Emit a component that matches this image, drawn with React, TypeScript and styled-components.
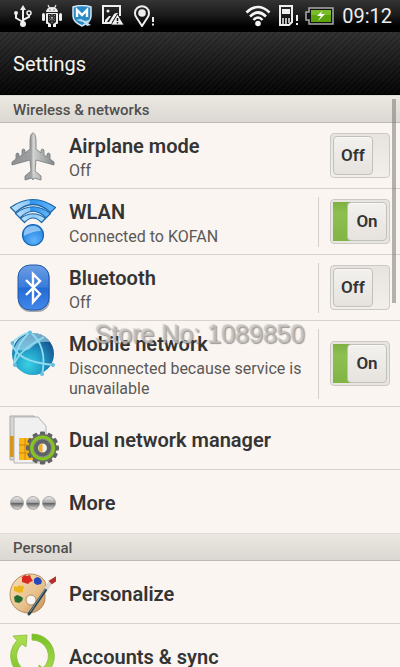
import React, { useState } from "react";
import styled, { createGlobalStyle } from "styled-components";

const GlobalStyle = createGlobalStyle`
  * { box-sizing: border-box; }
  body { margin: 0; background: #faf5f1; font-family: Roboto, "Noto Sans", sans-serif; color: #333; }
`;

const Screen = styled.div`
  position: relative;
  display: flex;
  flex-direction: column;
  height: 100vh;
  overflow: hidden;
  background: #faf5f1;
`;

const StatusBar = styled.div`
  flex: none;
  display: flex;
  align-items: center;
  justify-content: space-between;
  height: 31px;
  padding: 0 8px 0 13px;
  background: linear-gradient(#343434, #1a1a1a 50%, #000 85%);
  color: #eee;
`;

const IconGroup = styled.div<{ $gap: number }>`
  display: flex;
  align-items: center;
  gap: ${(p) => p.$gap}px;
  svg { display: block; }
`;

const Clock = styled.time`
  margin-left: 1px;
  font-size: 20px;
  line-height: 24px;
`;

const Header = styled.header`
  flex: none;
  display: flex;
  align-items: center;
  height: 64px;
  padding: 2px 13px 0;
  border-top: 1px solid #000;
  border-bottom: 1px solid #000;
  background:
    linear-gradient(rgba(52, 52, 52, 0.75), rgba(0, 0, 0, 0.85)),
    repeating-linear-gradient(135deg, #343434 0 2px, #121212 2px 4px);
`;

const Heading = styled.h1`
  margin: 0;
  font-size: 20px;
  line-height: 24px;
  font-weight: 400;
  color: #f6f4ec;
`;

const Content = styled.main`
  position: relative;
  flex: 1;
  min-height: 0;
  overflow: hidden;
`;

const SectionTitle = styled.h2`
  display: flex;
  align-items: center;
  height: 28px;
  margin: 0;
  padding: 2px 13px 0;
  border-top: 1px solid #dedbd5;
  border-bottom: 1px solid #bdbbb8;
  background: linear-gradient(#ebe8e1, #dbd8d3);
  font-size: 15px;
  font-weight: 500;
  color: #504f4d;
`;

const List = styled.ul`
  margin: 0;
  padding: 0;
  list-style: none;
`;

const Row = styled.li<{ $single?: boolean }>`
  display: flex;
  align-items: ${(p) => (p.$single ? "center" : "stretch")};
  gap: 12px;
  min-height: ${(p) => (p.$single ? 63 : 66)}px;
  padding: ${(p) => (p.$single ? "3px 10px 0 9px" : "8px 10px 7px 9px")};
  border-bottom: 1px solid #d5d2cf;
  &:last-child { border-bottom-color: #faf5f1; }
`;

const IconBox = styled.div`
  flex: none;
  width: 48px;
  height: 50px;
  svg { display: block; }
`;

const TextBlock = styled.div<{ $single?: boolean }>`
  flex: 1;
  min-width: 0;
  padding-top: ${(p) => (p.$single ? 0 : 3)}px;
`;

const Title = styled.div`
  font-size: 20px;
  line-height: 24px;
  font-weight: 600;
  color: #343434;
`;

const Detail = styled.div`
  margin-top: 3px;
  font-size: 16px;
  line-height: 20px;
  color: #5b5957;
`;

const Control = styled.div<{ $divided: boolean }>`
  flex: none;
  display: flex;
  align-items: center;
  padding: 0 0 2px 11px;
  border-left: 1px solid ${(p) => (p.$divided ? "#d3d0cd" : "transparent")};
`;

const Track = styled.button<{ $on: boolean }>`
  display: flex;
  justify-content: ${(p) => (p.$on ? "flex-end" : "flex-start")};
  width: 60px;
  height: 45px;
  padding: 2px;
  border: 1px solid #cbc9c5;
  border-radius: 4px;
  background: ${(p) =>
    p.$on
      ? "linear-gradient(#7fb043, #8cc152 30%, #80b445) 2px 2px / 22px 39px no-repeat, #e9e6e2"
      : "linear-gradient(#e7e4df, #f2eeea)"};
  font: inherit;
  cursor: pointer;
`;

const Knob = styled.span`
  display: flex;
  align-items: center;
  justify-content: center;
  width: 40px;
  height: 39px;
  border: 1px solid #c2c0bc;
  border-radius: 4px;
  background: linear-gradient(#f3f1ed, #e6e3df);
  box-shadow: inset 0 1px 0 #faf9f7;
  font-size: 17px;
  font-weight: 600;
  color: #333;
`;

const ScrollThumb = styled.div`
  position: absolute;
  top: 4px;
  right: 4px;
  width: 4px;
  height: 204px;
  background: rgba(120, 118, 116, 0.55);
`;

const Watermark = styled.div`
  position: absolute;
  top: 320px;
  left: 95px;
  font-family: "Liberation Sans", Arial, sans-serif;
  font-size: 25px;
  line-height: 28px;
  white-space: nowrap;
  color: rgba(196, 193, 190, 0.8);
  text-shadow: 1px 1px 1px rgba(90, 90, 90, 0.6), -1px -1px 1px rgba(150, 150, 150, 0.35);
  pointer-events: none;
`;

const UsbIcon = () => (
  <svg width="19" height="24" viewBox="0 0 19 24" fill="none" stroke="#eee" strokeWidth="2">
    <path d="M10 4v16M10 18L3 14V9M10 16l6-3v-2" />
    <path d="M10 1l3 5H7z" fill="#eee" stroke="none" />
    <circle cx="10" cy="20" r="3" fill="#eee" stroke="none" />
    <circle cx="3" cy="9" r="2" fill="#eee" stroke="none" />
    <circle cx="16" cy="9" r="2" strokeWidth="1.5" />
  </svg>
);

const RobotIcon = () => (
  <svg width="20" height="24" viewBox="0 0 20 24" fill="#eee">
    <path d="M4 8a6 5 0 0 1 12 0z" />
    <path d="M6 1l2 4M14 1l-2 4" stroke="#eee" strokeWidth="1.2" />
    <rect x="4" y="9" width="12" height="11" rx="1" />
    <rect x="0" y="9" width="3" height="8" rx="1.5" />
    <rect x="17" y="9" width="3" height="8" rx="1.5" />
    <path d="M6 19h3v4H6zM11 19h3v4h-3z" />
    <path d="M6 10h8v8l-4 3-4-3z" fill="#222" />
    <path d="M7 11l6 6M13 11l-6 6M10 10v10M7 14h6" stroke="#bbb" strokeWidth=".8" strokeDasharray="1.5 1" />
    <path d="M7.500 6h1M11.500 6h1" stroke="#222" />
  </svg>
);

const ShieldIcon = () => (
  <svg width="20" height="22" viewBox="0 0 20 22">
    <path d="M1 2q9-3 18 0v9q0 6-9 10Q1 17 1 11z" fill="#2889c7" stroke="#d4e6f2" strokeWidth="1.5" />
    <path d="M5 12V5l5 5 5-5v7" fill="none" stroke="#fff" strokeWidth="2.4" />
    <path d="M4 15l5-1 4 2 5-1-2 3 3 2-4 1-4-4z" fill="#b9dcf0" />
  </svg>
);

const PictureIcon = () => (
  <svg width="22" height="21" viewBox="0 0 22 21">
    <path d="M11 18H1V1h17v10" fill="none" stroke="#eee" strokeWidth="2" />
    <circle cx="6" cy="6" r="1.500" fill="#eee" />
    <path d="M3 17v-2l4-4h2l-4 6zM7 17l5-8 2-1h2l-6 9z" fill="#eee" />
    <path d="M15.500 9L22 20H9z" fill="#eee" stroke="#111" strokeWidth=".8" />
    <path d="M15.500 13v3M15.500 17v1.500" stroke="#111" strokeWidth="1.500" />
  </svg>
);

const PinIcon = () => (
  <svg width="21" height="22" viewBox="0 0 21 22">
    <path d="M8 21L2.500 12.500a7 7 0 1 1 11 0z" fill="none" stroke="#eee" strokeWidth="2" />
    <circle cx="8" cy="8" r="3.800" fill="#eee" />
    <path d="M19 12v5M19 18.500v2" stroke="#eee" strokeWidth="2" />
  </svg>
);

const SignalIcon = () => (
  <svg width="26" height="22" viewBox="0 0 26 22" fill="none" stroke="#f4f4f4" strokeWidth="2.600">
    <path d="M1.500 7.500q11.500-11 23 0M5 11.500q8-8 16 0M8.500 15q4.500-5 9 0" />
    <circle cx="13" cy="18.500" r="2.800" fill="#f4f4f4" stroke="none" />
  </svg>
);

const CardIcon = () => (
  <svg width="20" height="22" viewBox="0 0 20 22">
    <path d="M2 1h12v16l-3 3H2z" fill="none" stroke="#eee" strokeWidth="2" />
    <path d="M4 4h8v5H4z" fill="#eee" />
    <path d="M5 13v6M8 13v6M11 13v5" stroke="#eee" strokeWidth="1.500" />
    <path d="M19 10v6M19 18v2" stroke="#eee" strokeWidth="2" />
  </svg>
);

const BatteryIcon = () => (
  <svg width="29" height="18" viewBox="0 0 29 18">
    <path d="M4 1h24v16H4v-4H1V5h3z" fill="#111" stroke="#aaa" strokeWidth="1.500" />
    <path d="M6 3h20v12H6z" fill="#5da40b" />
    <path d="M6 3h20v5H6z" fill="#78bd28" />
    <path d="M17 4l-5 5h4l-3 5 7-7h-4z" fill="#fff" />
  </svg>
);

const PlaneIcon = () => (
  <svg width="48" height="50" viewBox="0 0 48 50">
    <defs>
      <linearGradient id="plane" x1="0" x2="1">
        <stop offset="0" stopColor="#8d8f90" />
        <stop offset=".46" stopColor="#9fa1a2" />
        <stop offset=".51" stopColor="#cfd0d0" />
        <stop offset="1" stopColor="#858788" />
      </linearGradient>
    </defs>
    <path
      d="M24 2c2 0 3 4 3 8v8l5 4v-3q1.500-2 3 0v5l3 2v-3q1.500-2 3 0v5l4 3v3l-18-5-1 11 6 5v4l-7-2-1 2-1-2-7 2v-4l6-5-1-11-18 5v-3l4-3v-5q1.500-2 3 0v3l3-2v-5q1.500-2 3 0v3l5-4v-8c0-4 1-8 3-8z"
      fill="url(#plane)"
      stroke="#77797a"
      strokeWidth=".8"
    />
    <path d="M24.500 6v37" stroke="#d4d5d5" strokeWidth="1.500" />
  </svg>
);

const WlanIcon = () => (
  <svg width="48" height="50" viewBox="0 0 48 50">
    <defs>
      <linearGradient id="arc" x1="0" x2="1">
        <stop offset="0" stopColor="#bfe1fa" />
        <stop offset=".42" stopColor="#8cc8f8" />
        <stop offset=".43" stopColor="#2b93ee" />
        <stop offset="1" stopColor="#68b8fb" />
      </linearGradient>
      <linearGradient id="arcLight" x1="0" x2="1">
        <stop offset="0" stopColor="#c9e6fb" />
        <stop offset=".5" stopColor="#8ccaf9" />
        <stop offset="1" stopColor="#b9dffb" />
      </linearGradient>
      <radialGradient id="ball" cx=".55" cy=".75">
        <stop offset="0" stopColor="#62b4fb" />
        <stop offset="1" stopColor="#2f8ce6" />
      </radialGradient>
    </defs>
    <g stroke="#1d68a8" strokeWidth="1.200" strokeLinejoin="round">
      <path d="M1.500 10.500Q24-5.500 46.500 10.500L41.500 15.500Q24-.5 6.500 15.500z" fill="url(#arc)" />
      <path d="M6.500 16.500Q24 3 41.500 16.500L37 21Q24 7.500 11 21z" fill="url(#arc)" />
      <path d="M11.500 21.500Q24 12 36.500 21.500L32.500 25.500Q24 16.500 15.500 25.500z" fill="url(#arcLight)" />
    </g>
    <circle cx="24" cy="38" r="10.500" fill="url(#ball)" stroke="#1765b5" strokeWidth="1.200" />
    <path d="M15 39q-1-10 9-10 6 0 8 5-8 0-17 5z" fill="#cbe6fb" opacity=".6" />
  </svg>
);

const BluetoothIcon = () => (
  <svg width="48" height="50" viewBox="0 0 48 50">
    <defs>
      <linearGradient id="blue" x2="0" y2="1">
        <stop offset="0" stopColor="#6c9ee4" />
        <stop offset=".48" stopColor="#397cda" />
        <stop offset=".52" stopColor="#236bd5" />
        <stop offset="1" stopColor="#4388eb" />
      </linearGradient>
    </defs>
    <rect x="9" y="3" width="32" height="46" rx="12" fill="#6b7787" opacity=".6" />
    <rect x="9" y="2" width="31" height="45" rx="12" fill="url(#blue)" stroke="#2259a9" />
    <path d="M17 17l14 14-7 8V11l7 7-14 14" fill="none" stroke="#fff" strokeWidth="2.400" />
  </svg>
);

const GlobeIcon = () => (
  <svg width="48" height="50" viewBox="0 0 48 50">
    <defs>
      <radialGradient id="globe" cx=".38" cy=".75" r=".75">
        <stop offset="0" stopColor="#38d2e3" />
        <stop offset=".5" stopColor="#2197c5" />
        <stop offset="1" stopColor="#14508b" />
      </radialGradient>
    </defs>
    <circle cx="24" cy="25" r="21" fill="url(#globe)" />
    <path d="M5 20Q10 5 26 4q10 1 15 9-13-1-18 5t-18 2z" fill="#b4e2f2" opacity=".6" />
    <g fill="none" stroke="#8edcf0" strokeWidth="1.800">
      <path d="M3 14q4 19 42 22" />
      <path d="M21 3q18 14 12 43" />
      <path d="M21 3Q6 17 5 36" />
      <path d="M5 36Q9 22 35 8" />
      <path d="M3 14Q11 6 21 3" />
    </g>
    <g fill="#64bedb">
      <circle cx="3.500" cy="14" r="2" />
      <circle cx="21" cy="3.500" r="2" />
      <circle cx="44" cy="36" r="2" />
      <circle cx="6" cy="36" r="2" />
      <circle cx="33" cy="45" r="2" />
    </g>
  </svg>
);

const teeth = Array.from({ length: 12 }, (_, i) => i * 30);

const SimGearIcon = () => (
  <svg width="50" height="50" viewBox="0 0 50 50">
    <path d="M1 1h24l7 7v37H1z" fill="#d5d5d5" stroke="#aaa" />
    <path d="M1 21h4v21H1z" fill="#d6961d" />
    <path d="M5 2h24l8 9v37H5z" fill="#f0f0f0" stroke="#b4b4b4" />
    <path d="M10 23h18v22H10z" fill="#fbb716" />
    <path d="M10 30h18M10 38h18M16 23v22" stroke="#c98710" />
    <g transform="translate(33.500 33)">
      <g fill="#5f6162">
        {teeth.map((angle) => (
          <rect key={angle} x="-2.500" y="-16.500" width="5" height="6" rx="1" transform={`rotate(${angle})`} />
        ))}
      </g>
      <circle r="14" fill="#696b6b" />
      <circle r="11" fill="#8a8c8c" stroke="#83c51c" strokeWidth="3" />
      <circle r="6.500" fill="#eee" stroke="#606365" strokeWidth="4" />
      <path d="M0-4a4 4 0 0 0 0 8z" fill="#f1ac22" />
    </g>
  </svg>
);

const MoreIcon = () => (
  <svg width="48" height="50" viewBox="0 0 48 50">
    <defs>
      <linearGradient id="bead" x2="0" y2="1">
        <stop offset="0" stopColor="#efefef" />
        <stop offset=".46" stopColor="#a5a5a5" />
        <stop offset=".5" stopColor="#5b5b5b" />
        <stop offset=".75" stopColor="#a0a0a0" />
        <stop offset="1" stopColor="#e6e6e6" />
      </linearGradient>
    </defs>
    <g fill="url(#bead)" stroke="#9a9a9a" strokeWidth=".8">
      <circle cx="8" cy="25" r="6.500" />
      <circle cx="24" cy="25" r="6.500" />
      <circle cx="40" cy="25" r="6.500" />
    </g>
  </svg>
);

const PaletteIcon = () => (
  <svg width="48" height="50" viewBox="0 0 48 50">
    <defs>
      <linearGradient id="wood" x2="1" y2="1">
        <stop offset="0" stopColor="#f6dfba" />
        <stop offset=".6" stopColor="#e8c18c" />
        <stop offset="1" stopColor="#c08a50" />
      </linearGradient>
    </defs>
    <path
      d="M1 26C1 14 10 5 21 5c9 0 16 5 16 12 0 5-2 6-1 10C37 37 29 44 20 44 9 44 1 36 1 26zm21 10a5 5 0 1 0 0-10 5 5 0 0 0 0 10z"
      fill="url(#wood)"
      fillRule="evenodd"
      stroke="#a57a4c"
      strokeWidth=".8"
    />
    <path d="M13 8l3-2 2 1 3-1 1 3 2 3-3 1-2 2-3-1-3-1z" fill="#d92a22" />
    <path d="M25 10l3-2 3 1 2 3-1 3-4 1-3-2z" fill="#2548bd" />
    <path d="M5 17l3 1 2-2 2 1 3 0-1 4v2l-4 1-2-1-3-1z" fill="#edb51d" />
    <path d="M5 28l3-2 3 1 3 2-1 3-3 2-4-1z" fill="#216b31" />
    <path d="M20 45l18-26" stroke="#294352" strokeWidth="3" strokeLinecap="round" />
    <path d="M21 43l16-24" stroke="#7999a9" />
    <path d="M37 20l5-7" stroke="#d6d7d5" strokeWidth="4" />
    <path d="M41 12l5-3v3l-3 2z" fill="#b72f2c" stroke="#b72f2c" strokeWidth="2" />
  </svg>
);

const SyncIcon = () => (
  <svg width="48" height="50" viewBox="0 0 48 50">
    <defs>
      <linearGradient id="sync" x2="0" y2="1">
        <stop offset="0" stopColor="#aee052" />
        <stop offset="1" stopColor="#78c026" />
      </linearGradient>
      <path id="arrow" d="M4 4l14-1-1 12-4-3A16 16 0 0 0 24 40v6A22 22 0 0 1 8 8.500z" />
    </defs>
    <g fill="url(#sync)" stroke="#86bb3a" strokeWidth=".8">
      <use href="#arrow" />
      <use href="#arrow" transform="rotate(180 23.500 24)" />
    </g>
  </svg>
);

function Switch({ label, initial }: { label: string; initial: boolean }) {
  const [on, setOn] = useState(initial);
  return (
    <Track type="button" role="switch" aria-checked={on} aria-label={label} $on={on} onClick={() => setOn(!on)}>
      <Knob>{on ? "On" : "Off"}</Knob>
    </Track>
  );
}

type Item = {
  title: string;
  icon: React.ReactNode;
  detail?: string;
  on?: boolean;
  divided?: boolean;
};

const networkItems: Item[] = [
  { title: "Airplane mode", detail: "Off", icon: <PlaneIcon />, on: false, divided: false },
  { title: "WLAN", detail: "Connected to KOFAN", icon: <WlanIcon />, on: true },
  { title: "Bluetooth", detail: "Off", icon: <BluetoothIcon />, on: false },
  { title: "Mobile network", detail: "Disconnected because service is unavailable", icon: <GlobeIcon />, on: true },
  { title: "Dual network manager", icon: <SimGearIcon /> },
  { title: "More", icon: <MoreIcon /> },
];

const personalItems: Item[] = [
  { title: "Personalize", icon: <PaletteIcon /> },
  { title: "Accounts & sync", icon: <SyncIcon /> },
];

function SettingsList({ items }: { items: Item[] }) {
  return (
    <List>
      {items.map(({ title, icon, detail, on, divided = true }) => (
        <Row key={title} $single={!detail}>
          <IconBox>{icon}</IconBox>
          <TextBlock $single={!detail}>
            <Title>{title}</Title>
            {detail && <Detail>{detail}</Detail>}
          </TextBlock>
          {on !== undefined && (
            <Control $divided={divided}>
              <Switch label={title} initial={on} />
            </Control>
          )}
        </Row>
      ))}
    </List>
  );
}

export default function App() {
  return (
    <Screen>
      <GlobalStyle />
      <StatusBar>
        <IconGroup $gap={10}>
          <UsbIcon />
          <RobotIcon />
          <ShieldIcon />
          <PictureIcon />
          <PinIcon />
        </IconGroup>
        <IconGroup $gap={7}>
          <SignalIcon />
          <CardIcon />
          <BatteryIcon />
          <Clock>09:12</Clock>
        </IconGroup>
      </StatusBar>
      <Header>
        <Heading>Settings</Heading>
      </Header>
      <Content>
        <SectionTitle>Wireless &amp; networks</SectionTitle>
        <SettingsList items={networkItems} />
        <SectionTitle>Personal</SectionTitle>
        <SettingsList items={personalItems} />
        <ScrollThumb />
      </Content>
      <Watermark>Store No: 1089850</Watermark>
    </Screen>
  );
}
